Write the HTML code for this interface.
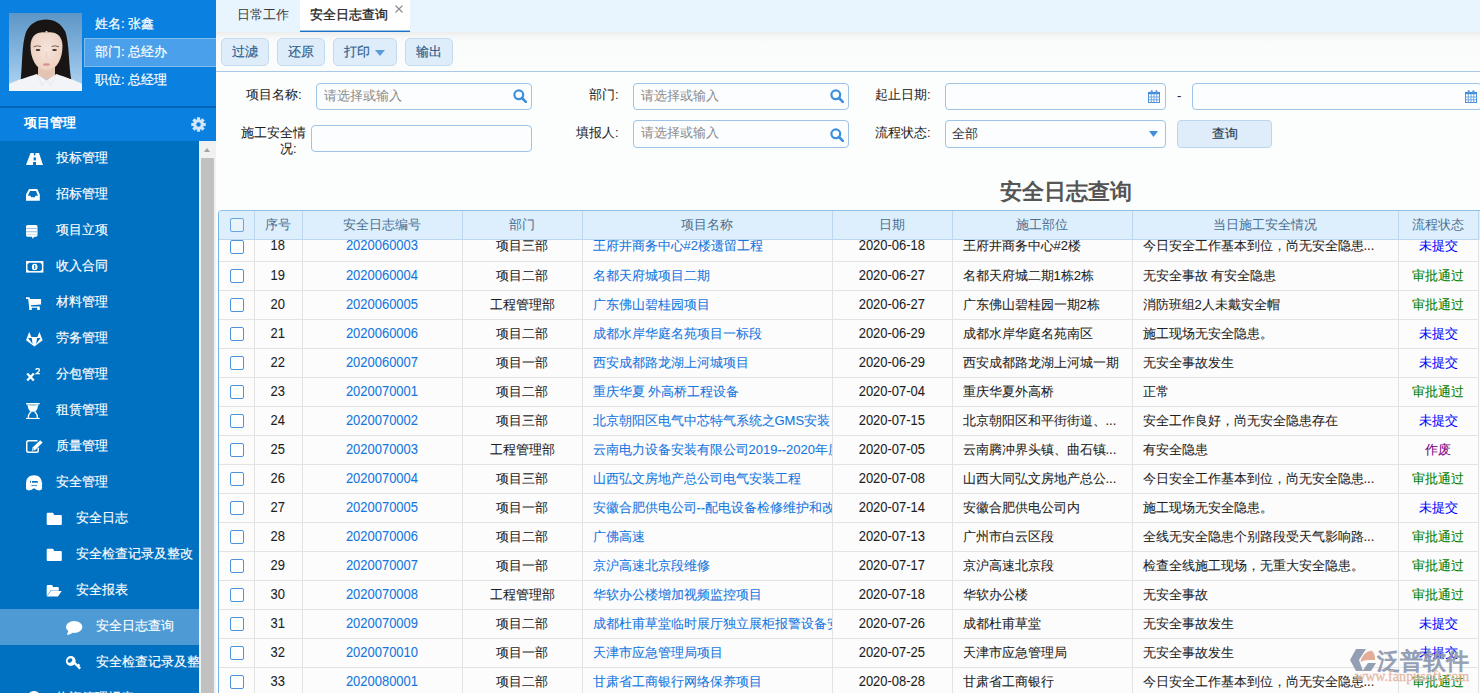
<!DOCTYPE html>
<html><head><meta charset="utf-8">
<style>
*{box-sizing:border-box}
html,body{margin:0;padding:0}
body{width:1480px;height:693px;overflow:hidden;position:relative;background:#fcfdfd;font-family:"Liberation Sans",sans-serif;font-size:13px;color:#333}
.abs{position:absolute;white-space:nowrap}
#side{position:absolute;left:0;top:0;width:216px;height:693px;background:#0070c1;overflow:hidden}
#prof{position:absolute;left:0;top:0;width:216px;height:106px;background:#0a80e0}
#prof .ln{position:absolute;left:95px;color:#fff;font-size:13px;line-height:16px;white-space:nowrap;-webkit-text-stroke:0.2px #fff}
#prof .hl{position:absolute;left:84px;top:38px;width:132px;height:29px;background:#4aa0ea;border:1px solid #7fbdf2;border-right:none}
#photo{position:absolute;left:9px;top:13px}
#sep{position:absolute;left:0;top:106px;width:216px;height:2px;background:#0566b9}
#hdr{position:absolute;left:0;top:108px;width:216px;height:33px;background:#0a80e0;color:#fff;font-weight:bold}
#menu{position:absolute;left:0;top:141px;width:199px;height:552px;overflow:hidden}
.mi{position:absolute;left:0;width:199px;height:36px}
.mi.sel{background:#4e9ad5}
.mt{position:absolute;color:#fff;line-height:16px;white-space:nowrap;-webkit-text-stroke:0.15px #fff}
#menuwrap{position:absolute;left:0;top:0;width:199px;height:693px;overflow:hidden}
.ic{position:absolute}
.sup{color:#fff;font-weight:bold;font-size:15px;line-height:14px}
.sup sup{font-size:9px;vertical-align:6px;line-height:0;margin-left:1px}
#sb{position:absolute;left:199px;top:141px;width:17px;height:552px;background:#f1f1f1}
#sb .th{position:absolute;left:2px;top:17px;width:13px;height:540px;background:#c1c1c1}
#sb .ar{position:absolute;left:5px;top:7px;width:0;height:0;border-left:3.5px solid transparent;border-right:3.5px solid transparent;border-bottom:4px solid #a3a3a3}

/* main */
#tabs{position:absolute;left:216px;top:0;width:1264px;height:32px;background:#e8f5fe}
.tab{position:absolute;top:0;height:32px;line-height:16px}
.tab span{position:absolute;top:6px;white-space:nowrap}
#tab2{left:84px;width:110px;background:#fff;box-shadow:inset 0 -1px 0 #1c73c7,inset 0 -2px 0 rgba(28,115,199,0.45)}
#tb{position:absolute;left:216px;top:32px;width:1264px;height:40px;background:linear-gradient(#ebedec 0,#f6f8f7 5px,#fafcfb 10px,#fbfdfc 100%);border-bottom:1px solid #a8c9e8}
.btn{position:absolute;top:6px;height:28px;background:#dfedfa;border:1px solid #c4daef;border-radius:5px;color:#2f5f8d;text-align:center;line-height:26px;-webkit-text-stroke:0.2px #2f5f8d}
.lbl{position:absolute;white-space:nowrap;text-align:right;line-height:16px;color:#1e1e1e;-webkit-text-stroke:0.05px #1e1e1e}
.inp{position:absolute;height:27px;background:#fcfdfe;border:1px solid #9ec3e6;border-radius:4px}
.ph{position:absolute;left:7px;top:4px;line-height:16px;color:#8a8a8a;white-space:nowrap}
.srch{position:absolute;right:4px;top:5px}
#title{position:absolute;left:1000px;top:179px;font-size:22px;font-weight:bold;color:#555;line-height:26px;white-space:nowrap}

#grid{position:absolute;left:218px;top:210px;width:1262px;height:483px;overflow:hidden;border-left:1px solid #79b3e6;border-top-left-radius:4px}
table{border-collapse:collapse;table-layout:fixed;width:1260px}
#thd{position:absolute;left:-1px;top:0;width:1262px;height:30px;background:#ddeefc;border-top:1px solid #8ec1ea;border-top-left-radius:4px;overflow:hidden}
#thd table{position:absolute;left:0;top:0}
#thd th{height:28px;font-weight:normal;color:#4c6f90;border-left:1px solid #bcd6ee;border-bottom:1px solid #bcd6ee;padding:0;text-align:center;line-height:16px}
#thd th.c0{border-left:none}
#tbd{position:absolute;left:0;top:30px;width:1262px;height:453px;overflow:hidden;background:#fdfcfd}
#tbd table{position:absolute;left:-1px;top:-8px}
#tbd td{-webkit-text-stroke:0.08px currentColor;height:29px;border-left:1px solid #e3e3e3;border-bottom:1px solid #e3e3e3;padding:0;white-space:nowrap;overflow:hidden;line-height:16px;color:#1e1e1e}
#tbd td.c0{border-left:none}
td.cc{text-align:center}
#tbd td.pl{padding-left:10px}
#tbd td.lk{color:#1477e0}
#tbd td.num{font-size:14px;padding-bottom:2px}
#tbd td.num b{font-weight:normal;display:inline-block;transform:scaleX(0.925)}
.cb{display:inline-block;width:14px;height:14px;border:1px solid #4b93dc;border-radius:2px;background:#fff;vertical-align:middle}
th .cb{border-color:#6aa4de;background:#e9f3fc}
#tbd td.c0,#thd th.c0{text-align:left;padding-left:12px}
</style></head><body>
<div id="side">
  <div id="prof">
    <svg id="photo" width="73" height="78" viewBox="0 0 73 78">
      <defs><linearGradient id="pbg" x1="0" y1="0" x2="0" y2="1"><stop offset="0" stop-color="#5d96c6"/><stop offset="0.6" stop-color="#8dbbe3"/><stop offset="1" stop-color="#b3d6f2"/></linearGradient>
      <radialGradient id="skin" cx="0.5" cy="0.45" r="0.6"><stop offset="0" stop-color="#f6e4da"/><stop offset="0.8" stop-color="#edd3c4"/><stop offset="1" stop-color="#dcb9a6"/></radialGradient></defs>
      <rect width="73" height="78" fill="url(#pbg)"/>
      <path d="M11.5 69C13.5 52 12.5 32 17 19C21 10 29 6.5 37 6.5C45 6.5 52 10 56.5 19C60.5 32 59.5 52 62.5 68L52 64H23Z" fill="#1a1515"/>
      <path d="M29 50H46V66H29Z" fill="#e3c4b2"/>
      <path d="M21.5 33C21.5 23 28 18 37.5 18C47 18 53.5 23 53.5 33C53.5 45 48.5 56.5 37.5 58.5C26.5 56.5 21.5 45 21.5 33Z" fill="url(#skin)"/>
      <path d="M37 7.5C29 8 23 14 20.5 28C24 21 30 18.5 36.5 19.5Z M38 7.5C46 8 52 14 54.5 28C51 21 45 18.5 38.5 19.5Z" fill="#1a1515"/>
      <path d="M0 78V71C8 67 19 64 27.5 61L37.5 67.5L47.5 61C56 64 66 67 73 71V78Z" fill="#f3f4f7"/>
      <path d="M27.5 61L33 72L37.5 67.5L42 72L47.5 61" fill="none" stroke="#dfe3ea" stroke-width="0.8"/>
      <path d="M24.5 33.8Q28.5 32 32 33.5M42.5 33.5Q46 32 50 33.8" stroke="#6a5048" stroke-width="0.9" fill="none"/>
      <ellipse cx="29" cy="37" rx="2.4" ry="1.1" fill="#3a2e2e"/><ellipse cx="45.5" cy="37" rx="2.4" ry="1.1" fill="#3a2e2e"/>
      <path d="M37.5 39V46" stroke="#ead0c2" stroke-width="1"/>
      <ellipse cx="37.5" cy="51.5" rx="3.4" ry="1.2" fill="#de8d93"/>
    </svg>
    <div class="hl"></div>
    <div class="ln" style="top:16px">姓名: 张鑫</div>
    <div class="ln" style="top:44px">部门: 总经办</div>
    <div class="ln" style="top:72px">职位: 总经理</div>
  </div>
  <div id="sep"></div>
  <div id="hdr"><span class="abs" style="left:24px;top:7px;line-height:16px">项目管理</span>
    <svg class="ic" style="left:191px;top:9px" width="15" height="15" viewBox="-7.5 -7.5 15 15"><g fill="#d2e7fb"><circle r="5.2"/><rect x="-1.6" y="-7.2" width="3.2" height="14.4"/><rect x="-1.6" y="-7.2" width="3.2" height="14.4" transform="rotate(45)"/><rect x="-1.6" y="-7.2" width="3.2" height="14.4" transform="rotate(90)"/><rect x="-1.6" y="-7.2" width="3.2" height="14.4" transform="rotate(135)"/></g><circle r="2.2" fill="#0a80e0"/></svg>
  </div>
  <div id="menuwrap">
<div class="mi" style="top:141px"></div>
<div class="mt" style="left:56px;top:150px">投标管理</div>
<svg class="ic" style="left:26px;top:153px" width="17" height="12" viewBox="0 0 17 12" fill="#fff"><path d="M4.5 0H13L17 12H0Z"/><rect x="7.9" y="0" width="1.5" height="2.4" fill="#0070c1"/><rect x="7.6" y="4.4" width="2.3" height="3" fill="#0070c1"/><rect x="7.1" y="9" width="2.9" height="3" fill="#0070c1"/></svg>
<div class="mi" style="top:177px"></div>
<div class="mt" style="left:56px;top:186px">招标管理</div>
<svg class="ic" style="left:26px;top:189px" width="14" height="12" viewBox="0 0 14 12" fill="#fff"><path fill-rule="evenodd" d="M3 0H11.3L13.8 5.5V11.8H0V5.5Z M4 2H9.9L12 6.8H9.4L8.8 8.3H5.1L4.5 6.8H1.9Z"/></svg>
<div class="mi" style="top:213px"></div>
<div class="mt" style="left:56px;top:222px">项目立项</div>
<svg class="ic" style="left:26px;top:225px" width="12" height="14" viewBox="0 0 12 14" fill="#fff"><path d="M1.5 0H10Q11.5 0 11.5 1.5V10.3Q11.5 11.7 10 11.7H8.5L6.5 13.8L6 11.7H1.5Q0 11.7 0 10.3V1.5Q0 0 1.5 0Z"/><rect x="0" y="3.2" width="11.5" height="0.9" fill="#8db8e0"/><rect x="0" y="6.3" width="11.5" height="0.9" fill="#8db8e0"/><rect x="0.5" y="9.2" width="10.5" height="0.8" fill="#c5dcf0"/></svg>
<div class="mi" style="top:249px"></div>
<div class="mt" style="left:56px;top:258px">收入合同</div>
<svg class="ic" style="left:26px;top:261px" width="18" height="12" viewBox="0 0 18 12" fill="#fff"><rect x="0" y="0" width="17.4" height="11.6"/><path d="M3 1.7H14.4L15.9 3.6V8.2L14.4 10.1H3L1.5 8.2V3.6Z" fill="#0070c1"/><ellipse cx="8.7" cy="6" rx="2.8" ry="3.3"/><rect x="8.2" y="4" width="1.1" height="4" fill="#0070c1"/></svg>
<div class="mi" style="top:285px"></div>
<div class="mt" style="left:56px;top:294px">材料管理</div>
<svg class="ic" style="left:26px;top:297px" width="16" height="13" viewBox="0 0 16 13" fill="#fff"><path d="M0 0.2H3.6L3.9 1.9H15.1V7.4L4.9 8.3L5.1 9.4H13.8V12.9H11.2V10.8H5.8V12.9H3.2V10.8L2.2 1.9H0Z"/></svg>
<div class="mi" style="top:321px"></div>
<div class="mt" style="left:56px;top:330px">劳务管理</div>
<svg class="ic" style="left:26px;top:332px" width="17" height="15" viewBox="0 0 17 15" fill="#fff"><path fill-rule="evenodd" d="M0 8.3L3.2 0L5.4 5H11.4L13.4 0L16.7 8.3L8.4 14.6Z M2.1 6H5.7L6.6 12Z M11 6H14.6L10.2 12Z"/></svg>
<div class="mi" style="top:357px"></div>
<div class="mt" style="left:56px;top:366px">分包管理</div>
<svg class="ic" style="left:26px;top:368px" width="15" height="14" viewBox="0 0 15 14" fill="#fff"><path d="M1.2 5.5L7.8 12.5M7.8 5.5L1.2 12.5" stroke="#fff" stroke-width="2.3" fill="none"/><path d="M9.6 1.6Q10.5 0.4 11.9 0.5Q13.4 0.7 13.4 2Q13.4 3 12.2 4L10.3 5.6H13.8" stroke="#fff" stroke-width="1.3" fill="none"/></svg>
<div class="mi" style="top:393px"></div>
<div class="mt" style="left:56px;top:402px">租赁管理</div>
<svg class="ic" style="left:26px;top:403px" width="14" height="16" viewBox="0 0 14 16" fill="#fff"><rect x="0" y="0" width="13.7" height="1.4"/><path d="M1.3 1.4H12.4Q11.8 6 9.6 8.4H4.1Q1.9 6 1.3 1.4Z"/><rect x="3.3" y="1.6" width="7" height="1.2" fill="#9cc2e6"/><path fill-rule="evenodd" d="M4.1 8.4Q1.6 11 1.6 15.2H12.1Q12.1 11 9.6 8.4Z M5.3 9.2Q3 11 3 15.2H10.7Q10.7 11 8.4 9.2Q6.85 8.3 5.3 9.2Z"/><rect x="0" y="14.9" width="13.7" height="1.1"/></svg>
<div class="mi" style="top:429px"></div>
<div class="mt" style="left:56px;top:438px">质量管理</div>
<svg class="ic" style="left:26px;top:440px" width="17" height="13" viewBox="0 0 17 13" fill="#fff"><path d="M11.5 0.75H2.5Q0.75 0.75 0.75 2.5V10.5Q0.75 12.25 2.5 12.25H10.5Q12.25 12.25 12.25 10.5V7.8" stroke="#fff" stroke-width="1.5" fill="none"/><path d="M14.1 0.2L16.6 2.5L9.2 10L5.9 10.8L6.6 7.6Z"/><rect x="6.8" y="8.6" width="1" height="1" fill="#0070c1"/></svg>
<div class="mi" style="top:465px"></div>
<div class="mt" style="left:56px;top:474px">安全管理</div>
<svg class="ic" style="left:26px;top:475px" width="17" height="16" viewBox="0 0 17 16" fill="#fff"><path d="M8 0.2C12.5 0.2 15.8 3 15.8 7.5C16.3 8.5 16.3 9.8 15.8 10.5C16.3 11.5 16.3 13.5 15.5 14.6C14.5 15.8 11.5 15.8 9.4 14L8 13.2L6.6 14C4.5 15.8 1.5 15.8 0.5 14.6C-0.3 13.5 -0.3 11.5 0.2 10.5C-0.3 9.8 -0.3 8.5 0.2 7.5C0.2 3 3.5 0.2 8 0.2Z"/><rect x="4.1" y="5.8" width="0.9" height="1.9" fill="#0070c1"/><rect x="6" y="6" width="5.8" height="1.7" fill="#0070c1"/><rect x="5.3" y="10" width="5.7" height="1.1" fill="#4d94d0"/></svg>
<div class="mi" style="top:501px"></div>
<div class="mt" style="left:76px;top:510px">安全日志</div>
<svg class="ic" style="left:46px;top:512px" width="16" height="13" viewBox="0 0 16 13" fill="#fff"><path d="M1.7 0.7H6.6Q7.2 0.7 7.6 1.5L8 2.9H14.8Q15.8 2.9 15.8 4V12Q15.8 12.9 14.8 12.9H1.7Q0.7 12.9 0.7 12V1.7Q0.7 0.7 1.7 0.7Z"/></svg>
<div class="mi" style="top:537px"></div>
<div class="mt" style="left:76px;top:546px">安全检查记录及整改</div>
<svg class="ic" style="left:46px;top:548px" width="16" height="13" viewBox="0 0 16 13" fill="#fff"><path d="M1.7 0.7H6.6Q7.2 0.7 7.6 1.5L8 2.9H14.8Q15.8 2.9 15.8 4V12Q15.8 12.9 14.8 12.9H1.7Q0.7 12.9 0.7 12V1.7Q0.7 0.7 1.7 0.7Z"/></svg>
<div class="mi" style="top:573px"></div>
<div class="mt" style="left:76px;top:582px">安全报表</div>
<svg class="ic" style="left:46px;top:584px" width="16" height="13" viewBox="0 0 16 13" fill="#fff"><path d="M1.7 1H5.6Q6.2 1 6.6 1.8L7 3H11.8Q12.8 3 12.8 4V6.3H4.8L0.7 12V2Q0.7 1 1.7 1Z"/><rect x="4.5" y="6.2" width="8.3" height="0.8" fill="#c9def2"/><path d="M4.8 7H15.7L12 12.6H0.7Z"/></svg>
<div class="mi sel" style="top:609px"></div>
<div class="mt" style="left:96px;top:618px">安全日志查询</div>
<svg class="ic" style="left:65px;top:620px" width="18" height="16" viewBox="0 0 18 16" fill="#fff"><ellipse cx="9.2" cy="7.1" rx="8.2" ry="6"/><path d="M3.5 10.5L1.9 14.9Q5 14.5 8 12.8Z"/></svg>
<div class="mi" style="top:645px"></div>
<div class="mt" style="left:96px;top:654px">安全检查记录及整改报表</div>
<svg class="ic" style="left:65px;top:655px" width="17" height="17" viewBox="0 0 17 17" fill="#fff"><ellipse cx="5.8" cy="6" rx="4.9" ry="5.1"/><ellipse cx="5" cy="5.5" rx="2.6" ry="1.9" transform="rotate(-40 5 5.5)" fill="#0070c1"/><path d="M8.3 8.3L9.9 6.8L16 12.8L14.4 14.4Z"/><path d="M12 10L13.6 8.5L15.3 10.2L13.7 11.7Z"/></svg>
<div class="mi" style="top:681px"></div>
<div class="mt" style="left:56px;top:690px">物资管理报表</div>
<svg class="ic" style="left:27px;top:691px" width="14" height="14" viewBox="0 0 14 14" fill="#fff"><circle cx="7" cy="7" r="7"/></svg>
  </div>
  <div id="sb"><div class="ar"></div><div class="th"></div></div>
</div>

<div id="tabs">
  <div class="tab" style="left:0;width:84px"><span style="left:21px;top:7px;color:#3a3a3a">日常工作</span></div>
  <div class="tab" id="tab2"><span style="left:10px;top:7px;color:#222;-webkit-text-stroke:0.3px #222">安全日志查询</span>
    <svg class="ic" style="left:95px;top:5px" width="8" height="8" viewBox="0 0 8 8"><path d="M0.5 0.5L7.5 7.5M7.5 0.5L0.5 7.5" stroke="#8a8a8a" stroke-width="1.1"/></svg>
  </div>
</div>
<div id="tb">
  <div class="btn" style="left:5px;width:48px">过滤</div>
  <div class="btn" style="left:61px;width:48px">还原</div>
  <div class="btn" style="left:117px;width:64px;text-align:left;padding-left:10px">打印<svg class="ic" style="left:41px;top:11px" width="10" height="6" viewBox="0 0 10 6"><path d="M0 0H10L5 6Z" fill="#5b9bd8"/></svg></div>
  <div class="btn" style="left:189px;width:48px">输出</div>
</div>

<!-- form -->
<div class="lbl" style="left:246px;top:87px">项目名称:</div>
<div class="inp" style="left:316px;top:83px;width:216px"><span class="ph">请选择或输入</span>
  <svg class="srch" width="14" height="14" viewBox="0 0 14 14"><circle cx="5.8" cy="5.8" r="4.4" fill="none" stroke="#3d8fdc" stroke-width="2.2"/><path d="M9 9L12.8 12.8" stroke="#3d8fdc" stroke-width="2.6" stroke-linecap="round"/></svg></div>
<div class="lbl" style="left:241px;top:125px">施工安全情</div><div class="lbl" style="left:280px;top:141px">况:</div>
<div class="inp" style="left:311px;top:125px;width:221px"></div>

<div class="lbl" style="left:589px;top:87px">部门:</div>
<div class="inp" style="left:633px;top:83px;width:216px"><span class="ph">请选择或输入</span>
  <svg class="srch" width="14" height="14" viewBox="0 0 14 14"><circle cx="5.8" cy="5.8" r="4.4" fill="none" stroke="#3d8fdc" stroke-width="2.2"/><path d="M9 9L12.8 12.8" stroke="#3d8fdc" stroke-width="2.6" stroke-linecap="round"/></svg></div>
<div class="lbl" style="left:576px;top:125px">填报人:</div>
<div class="inp" style="left:633px;top:120px;width:216px;height:28px"><span class="ph">请选择或输入</span>
  <svg class="srch" style="top:7px" width="14" height="14" viewBox="0 0 14 14"><circle cx="5.8" cy="5.8" r="4.4" fill="none" stroke="#3d8fdc" stroke-width="2.2"/><path d="M9 9L12.8 12.8" stroke="#3d8fdc" stroke-width="2.6" stroke-linecap="round"/></svg></div>

<div class="lbl" style="left:875px;top:87px">起止日期:</div>
<div class="inp" style="left:945px;top:83px;width:221px">
  <svg class="srch" style="right:5px;top:6px" width="12" height="13" viewBox="0 0 12 13"><rect x="0.5" y="2.5" width="11" height="10" fill="#fff" stroke="#4d93dc"/><rect x="0" y="2" width="12" height="2.2" fill="#3f8bd9"/><path d="M0.5 7H11.5M0.5 9.8H11.5M3.25 4V12.5M6 4V12.5M8.75 4V12.5" stroke="#62a0e0" stroke-width="0.9"/><rect x="2.6" y="0.2" width="2.2" height="3" rx="0.8" fill="#5a9ade"/><rect x="7.3" y="0.2" width="2.2" height="3" rx="0.8" fill="#5a9ade"/></svg></div>
<div class="lbl" style="left:1177px;top:88px">-</div>
<div class="inp" style="left:1192px;top:83px;width:290px">
  <svg class="srch" style="left:272px;top:6px" width="12" height="13" viewBox="0 0 12 13"><rect x="0.5" y="2.5" width="11" height="10" fill="#fff" stroke="#4d93dc"/><rect x="0" y="2" width="12" height="2.2" fill="#3f8bd9"/><path d="M0.5 7H11.5M0.5 9.8H11.5M3.25 4V12.5M6 4V12.5M8.75 4V12.5" stroke="#62a0e0" stroke-width="0.9"/><rect x="2.6" y="0.2" width="2.2" height="3" rx="0.8" fill="#5a9ade"/><rect x="7.3" y="0.2" width="2.2" height="3" rx="0.8" fill="#5a9ade"/></svg></div>

<div class="lbl" style="left:875px;top:125px">流程状态:</div>
<div class="inp" style="left:945px;top:120px;width:221px;height:28px"><span class="ph" style="color:#333;left:6px;top:5px">全部</span>
  <svg class="srch" style="right:7px;top:10px" width="9" height="6" viewBox="0 0 9 6"><path d="M0 0H9L4.5 6Z" fill="#3f8fdc"/></svg></div>
<div class="btn" style="left:1177px;top:120px;width:95px;height:28px;color:#333;border-color:#bcd6ee;border-radius:4px">查询</div>

<div id="title">安全日志查询</div>

<div id="grid">
  <div id="tbd"><table><colgroup><col style="width:36px"><col style="width:48px"><col style="width:160px"><col style="width:120px"><col style="width:250px"><col style="width:120px"><col style="width:180px"><col style="width:266px"><col style="width:80px"></colgroup>
<tr><td class="c0"><i class="cb"></i></td><td class="cc num"><b>18</b></td><td class="cc lk num"><b>2020060003</b></td><td class="cc">项目三部</td><td class="pl lk">王府井商务中心#2楼遗留工程</td><td class="cc num"><b>2020-06-18</b></td><td class="pl">王府井商务中心#2楼</td><td class="pl">今日安全工作基本到位，尚无安全隐患...</td><td class="cc" style="color:#0000ff">未提交</td></tr>
<tr><td class="c0"><i class="cb"></i></td><td class="cc num"><b>19</b></td><td class="cc lk num"><b>2020060004</b></td><td class="cc">项目二部</td><td class="pl lk">名都天府城项目二期</td><td class="cc num"><b>2020-06-27</b></td><td class="pl">名都天府城二期1栋2栋</td><td class="pl">无安全事故 有安全隐患</td><td class="cc" style="color:#008000">审批通过</td></tr>
<tr><td class="c0"><i class="cb"></i></td><td class="cc num"><b>20</b></td><td class="cc lk num"><b>2020060005</b></td><td class="cc">工程管理部</td><td class="pl lk">广东佛山碧桂园项目</td><td class="cc num"><b>2020-06-27</b></td><td class="pl">广东佛山碧桂园一期2栋</td><td class="pl">消防班组2人未戴安全帽</td><td class="cc" style="color:#008000">审批通过</td></tr>
<tr><td class="c0"><i class="cb"></i></td><td class="cc num"><b>21</b></td><td class="cc lk num"><b>2020060006</b></td><td class="cc">项目二部</td><td class="pl lk">成都水岸华庭名苑项目一标段</td><td class="cc num"><b>2020-06-29</b></td><td class="pl">成都水岸华庭名苑南区</td><td class="pl">施工现场无安全隐患。</td><td class="cc" style="color:#0000ff">未提交</td></tr>
<tr><td class="c0"><i class="cb"></i></td><td class="cc num"><b>22</b></td><td class="cc lk num"><b>2020060007</b></td><td class="cc">项目一部</td><td class="pl lk">西安成都路龙湖上河城项目</td><td class="cc num"><b>2020-06-29</b></td><td class="pl">西安成都路龙湖上河城一期</td><td class="pl">无安全事故发生</td><td class="cc" style="color:#0000ff">未提交</td></tr>
<tr><td class="c0"><i class="cb"></i></td><td class="cc num"><b>23</b></td><td class="cc lk num"><b>2020070001</b></td><td class="cc">项目二部</td><td class="pl lk">重庆华夏 外高桥工程设备</td><td class="cc num"><b>2020-07-04</b></td><td class="pl">重庆华夏外高桥</td><td class="pl">正常</td><td class="cc" style="color:#008000">审批通过</td></tr>
<tr><td class="c0"><i class="cb"></i></td><td class="cc num"><b>24</b></td><td class="cc lk num"><b>2020070002</b></td><td class="cc">项目三部</td><td class="pl lk">北京朝阳区电气中芯特气系统之GMS安装</td><td class="cc num"><b>2020-07-15</b></td><td class="pl">北京朝阳区和平街街道、...</td><td class="pl">安全工作良好，尚无安全隐患存在</td><td class="cc" style="color:#0000ff">未提交</td></tr>
<tr><td class="c0"><i class="cb"></i></td><td class="cc num"><b>25</b></td><td class="cc lk num"><b>2020070003</b></td><td class="cc">工程管理部</td><td class="pl lk">云南电力设备安装有限公司2019--2020年度</td><td class="cc num"><b>2020-07-05</b></td><td class="pl">云南腾冲界头镇、曲石镇...</td><td class="pl">有安全隐患</td><td class="cc" style="color:#800080">作废</td></tr>
<tr><td class="c0"><i class="cb"></i></td><td class="cc num"><b>26</b></td><td class="cc lk num"><b>2020070004</b></td><td class="cc">项目三部</td><td class="pl lk">山西弘文房地产总公司电气安装工程</td><td class="cc num"><b>2020-07-08</b></td><td class="pl">山西大同弘文房地产总公...</td><td class="pl">今日安全工作基本到位，尚无安全隐患...</td><td class="cc" style="color:#008000">审批通过</td></tr>
<tr><td class="c0"><i class="cb"></i></td><td class="cc num"><b>27</b></td><td class="cc lk num"><b>2020070005</b></td><td class="cc">项目一部</td><td class="pl lk">安徽合肥供电公司--配电设备检修维护和改造</td><td class="cc num"><b>2020-07-14</b></td><td class="pl">安徽合肥供电公司内</td><td class="pl">施工现场无安全隐患。</td><td class="cc" style="color:#0000ff">未提交</td></tr>
<tr><td class="c0"><i class="cb"></i></td><td class="cc num"><b>28</b></td><td class="cc lk num"><b>2020070006</b></td><td class="cc">项目二部</td><td class="pl lk">广佛高速</td><td class="cc num"><b>2020-07-13</b></td><td class="pl">广州市白云区段</td><td class="pl">全线无安全隐患个别路段受天气影响路...</td><td class="cc" style="color:#008000">审批通过</td></tr>
<tr><td class="c0"><i class="cb"></i></td><td class="cc num"><b>29</b></td><td class="cc lk num"><b>2020070007</b></td><td class="cc">项目一部</td><td class="pl lk">京沪高速北京段维修</td><td class="cc num"><b>2020-07-17</b></td><td class="pl">京沪高速北京段</td><td class="pl">检查全线施工现场，无重大安全隐患。</td><td class="cc" style="color:#008000">审批通过</td></tr>
<tr><td class="c0"><i class="cb"></i></td><td class="cc num"><b>30</b></td><td class="cc lk num"><b>2020070008</b></td><td class="cc">工程管理部</td><td class="pl lk">华软办公楼增加视频监控项目</td><td class="cc num"><b>2020-07-18</b></td><td class="pl">华软办公楼</td><td class="pl">无安全事故</td><td class="cc" style="color:#008000">审批通过</td></tr>
<tr><td class="c0"><i class="cb"></i></td><td class="cc num"><b>31</b></td><td class="cc lk num"><b>2020070009</b></td><td class="cc">项目二部</td><td class="pl lk">成都杜甫草堂临时展厅独立展柜报警设备安装</td><td class="cc num"><b>2020-07-26</b></td><td class="pl">成都杜甫草堂</td><td class="pl">无安全事故发生</td><td class="cc" style="color:#0000ff">未提交</td></tr>
<tr><td class="c0"><i class="cb"></i></td><td class="cc num"><b>32</b></td><td class="cc lk num"><b>2020070010</b></td><td class="cc">项目一部</td><td class="pl lk">天津市应急管理局项目</td><td class="cc num"><b>2020-07-25</b></td><td class="pl">天津市应急管理局</td><td class="pl">无安全事故发生</td><td class="cc" style="color:#0000ff">未提交</td></tr>
<tr><td class="c0"><i class="cb"></i></td><td class="cc num"><b>33</b></td><td class="cc lk num"><b>2020080001</b></td><td class="cc">项目二部</td><td class="pl lk">甘肃省工商银行网络保养项目</td><td class="cc num"><b>2020-08-28</b></td><td class="pl">甘肃省工商银行</td><td class="pl">今日安全工作基本到位，尚无安全隐患...</td><td class="cc" style="color:#008000">审批通过</td></tr>
  </table></div>
  <div class="abs" style="left:1259px;top:30px;width:1px;height:453px;background:#e3e3e3"></div>
  <div id="thd"><table><colgroup><col style="width:36px"><col style="width:48px"><col style="width:160px"><col style="width:120px"><col style="width:250px"><col style="width:120px"><col style="width:180px"><col style="width:266px"><col style="width:80px"></colgroup><tr><th class="c0"><i class="cb"></i></th><th>序号</th><th>安全日志编号</th><th>部门</th><th>项目名称</th><th>日期</th><th>施工部位</th><th>当日施工安全情况</th><th>流程状态</th></tr></table><div class="abs" style="left:1260px;top:0;width:1px;height:29px;background:#bcd6ee"></div></div>
</div>

<!-- watermark -->
<div id="wm" style="position:absolute;left:1350px;top:646px;width:130px;height:47px;opacity:0.9">
  <svg class="ic" style="left:0;top:2px" width="27" height="25" viewBox="0 0 27 25"><path d="M6 1H16L9 12L13 23H6L0 12Z" fill="#8a96ad"/><path d="M10.5 14Q12.5 4 21.5 2.5Q25.5 5.5 25 12H18.5Q14.5 12 10.5 14Z" fill="#e1a58c"/><path d="M12.5 23L18 15H26L21 23Z" fill="#8a96ad"/></svg>
  <div class="abs" style="left:27px;top:1px;font-size:23px;line-height:28px;color:#8a96ad;font-weight:normal;-webkit-text-stroke:1px #8a96ad">泛普软件</div>
  <div class="abs" style="left:5px;top:24px;font-family:'Liberation Serif',serif;font-size:14px;line-height:14px;color:#e3b39d;letter-spacing:0.05px;-webkit-text-stroke:0.3px #e3b39d">www.fanpusoft.com</div>
</div>
</body></html>
